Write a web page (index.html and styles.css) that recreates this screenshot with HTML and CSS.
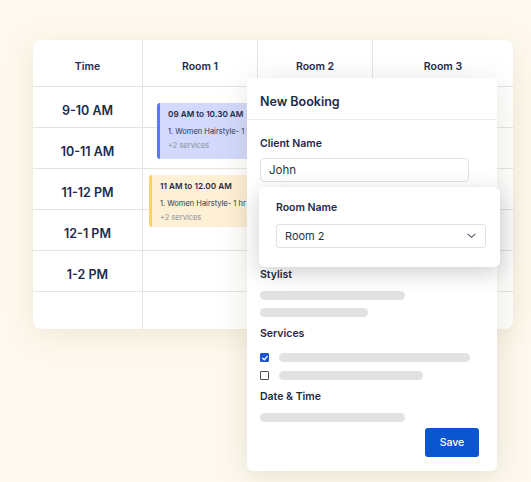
FILE: index.html
```html
<!DOCTYPE html>
<html lang="en">
<head>
  <meta charset="UTF-8" />
  <meta name="viewport" content="width=device-width, initial-scale=1.0"/>
  <title>Salon Booking</title>
  <link rel="stylesheet" href="styles.css">
</head>
<body>
  <div class="stage">
    <div class="schedule">
      <div class="grid">
        <div class="cell head">Time</div>
        <div class="cell head">Room 1</div>
        <div class="cell head">Room 2</div>
        <div class="cell head">Room 3</div>

        <div class="cell time">9-10 AM</div><div class="cell"></div><div class="cell"></div><div class="cell"></div>
        <div class="cell time">10-11 AM</div><div class="cell"></div><div class="cell"></div><div class="cell"></div>
        <div class="cell time">11-12 PM</div><div class="cell"></div><div class="cell"></div><div class="cell"></div>
        <div class="cell time">12-1 PM</div><div class="cell"></div><div class="cell"></div><div class="cell"></div>
        <div class="cell time">1-2 PM</div><div class="cell"></div><div class="cell"></div><div class="cell"></div>
        <div class="cell last"></div><div class="cell last"></div><div class="cell last"></div><div class="cell last"></div>
      </div>

      <div class="event event-blue">
        <div class="event-title">09 AM to 10.30 AM</div>
        <div class="event-item">1. Women Hairstyle- 1 hr</div>
        <div class="event-more">+2 services</div>
      </div>
      <div class="event event-yellow">
        <div class="event-title">11 AM to 12.00 AM</div>
        <div class="event-item">1. Women Hairstyle- 1 hr</div>
        <div class="event-more">+2 services</div>
      </div>
    </div>

    <div class="modal">
      <div class="modal-head">New Booking</div>
      <div class="modal-body">
        <div class="label">Client Name</div>
        <div class="input">John</div>

        <div class="room-gap"></div>

        <div class="label">Stylist</div>
        <div class="bar bar-145 first"></div>
        <div class="bar bar-108"></div>

        <div class="label section">Services</div>
        <div class="check-row first-check">
          <span class="check checked">
            <svg viewBox="0 0 10 10" width="10" height="10"><path d="M2.6 5.2 L4.3 6.8 L7.4 3.4" fill="none" stroke="#fff" stroke-width="1.3" stroke-linecap="round" stroke-linejoin="round"/></svg>
          </span>
          <span class="bar bar-191"></span>
        </div>
        <div class="check-row">
          <span class="check"></span>
          <span class="bar bar-144"></span>
        </div>

        <div class="label section">Date &amp; Time</div>
        <div class="bar bar-145 first"></div>

        <div class="actions">
          <button class="save">Save</button>
        </div>
      </div>

      <div class="room-pop">
        <div class="label">Room Name</div>
        <div class="select">
          <span>Room 2</span>
          <svg viewBox="0 0 10 6" width="9" height="6"><path d="M1 1 L5 4.6 L9 1" fill="none" stroke="#4a5468" stroke-width="1.2" stroke-linecap="round" stroke-linejoin="round"/></svg>
        </div>
      </div>
    </div>
  </div>
</body>
</html>
```

FILE: styles.css
```css
body {
  margin: 0;
  font-family: 'Inter', 'Noto Sans', sans-serif;
  background: #fdf9ee;
  color: #1e2a4b;
}
.stage {
  position: relative;
  width: 531px;
  height: 482px;
  overflow: hidden;
}
.schedule {
  position: relative;
  margin: 40px 0 0 33px;
  width: 480px;
  background: #fff;
  border-radius: 8px;
  box-shadow: 0 6px 28px rgba(170, 150, 100, 0.16);
  overflow: hidden;
}
.grid {
  display: grid;
  grid-template-columns: 110px 115px 115px 140px;
  grid-template-rows: 47px repeat(5, 41px) 37px;
}
.cell {
  border-right: 1px solid #e3e3e3;
  border-bottom: 1px solid #e3e3e3;
  display: flex;
  align-items: center;
  justify-content: center;
}
.cell:nth-child(4n) {
  border-right: none;
}
.cell.last {
  border-bottom: none;
}
.head {
  font-size: 10.5px;
  font-weight: 600;
  padding-top: 7px;
}
.time {
  font-size: 12.5px;
  font-weight: 600;
  padding-top: 7px;
}
.event {
  position: absolute;
  width: 150px;
  border-radius: 3px;
  padding: 6px 0 0 8px;
  box-sizing: border-box;
  white-space: nowrap;
}
.event-blue {
  left: 124px;
  top: 63px;
  height: 56px;
  background: #d2d9fc;
  border-left: 3px solid #5d79f2;
}
.event-yellow {
  left: 116px;
  top: 135px;
  height: 52px;
  background: #fdf0d5;
  border-left: 3px solid #fdd06c;
}
.event-title {
  font-size: 8.2px;
  font-weight: 600;
}
.event-item {
  font-size: 7.5px;
  margin-top: 8px;
  color: #2c3550;
}
.event-more {
  font-size: 7.5px;
  margin-top: 5px;
  color: #8c8f9a;
}
.modal {
  position: absolute;
  left: 247px;
  top: 78px;
  width: 250px;
  height: 393px;
  background: #fff;
  border-radius: 6px;
  box-shadow: 0 4px 30px rgba(120, 110, 80, 0.18);
}
.modal-head {
  height: 42px;
  box-sizing: border-box;
  padding: 16px 0 0 13px;
  font-size: 12.5px;
  font-weight: 600;
  border-bottom: 1px solid #ececec;
}
.modal-body {
  display: flex;
  flex-direction: column;
  padding: 17px 18px 0 13px;
}
.label {
  font-size: 10.5px;
  font-weight: 600;
  line-height: 14px;
}
.input {
  margin-top: 7px;
  width: 209px;
  height: 24px;
  box-sizing: border-box;
  border: 1px solid #e2e2e2;
  border-radius: 4px;
  padding-left: 8px;
  font-size: 11.5px;
  line-height: 22px;
  color: #2a3348;
}
.room-gap {
  height: 86px;
}
.bar {
  display: block;
  height: 9px;
  border-radius: 5px;
  background: #e2e2e2;
  margin-top: 8px;
}
.bar.first {
  margin-top: 9px;
}
.bar-145 { width: 145px; }
.bar-108 { width: 108px; }
.bar-191 { width: 191px; }
.bar-144 { width: 144px; }
.section {
  margin-top: 10px;
}
.check-row {
  display: flex;
  align-items: center;
  gap: 10px;
  margin-top: 9px;
}
.check-row.first-check {
  margin-top: 12px;
}
.check-row .bar {
  margin-top: 0;
}
.check {
  width: 9px;
  height: 9px;
  box-sizing: border-box;
  border: 1px solid #4a4f5c;
  border-radius: 1px;
  display: flex;
  align-items: center;
  justify-content: center;
}
.check.checked {
  background: #1b55d6;
  border-color: #1b55d6;
}
.check svg {
  flex: none;
}
.actions {
  display: flex;
  justify-content: flex-end;
  margin-top: 6px;
}
.save {
  width: 54px;
  height: 29px;
  border: none;
  border-radius: 3px;
  background: #0b55cf;
  color: #fff;
  font-family: inherit;
  font-size: 10.5px;
  font-weight: 500;
}
.room-pop {
  position: absolute;
  left: 12px;
  top: 109px;
  width: 241px;
  height: 80px;
  box-sizing: border-box;
  padding: 14px 0 0 17px;
  background: #fff;
  border-radius: 6px;
  box-shadow: 0 6px 22px rgba(40, 40, 50, 0.22);
}
.select {
  margin-top: 9px;
  width: 210px;
  height: 24px;
  box-sizing: border-box;
  border: 1px solid #e2e2e2;
  border-radius: 3px;
  display: flex;
  align-items: center;
  justify-content: space-between;
  padding: 0 9px 0 8px;
  font-size: 11px;
  color: #2a3348;
}
```
